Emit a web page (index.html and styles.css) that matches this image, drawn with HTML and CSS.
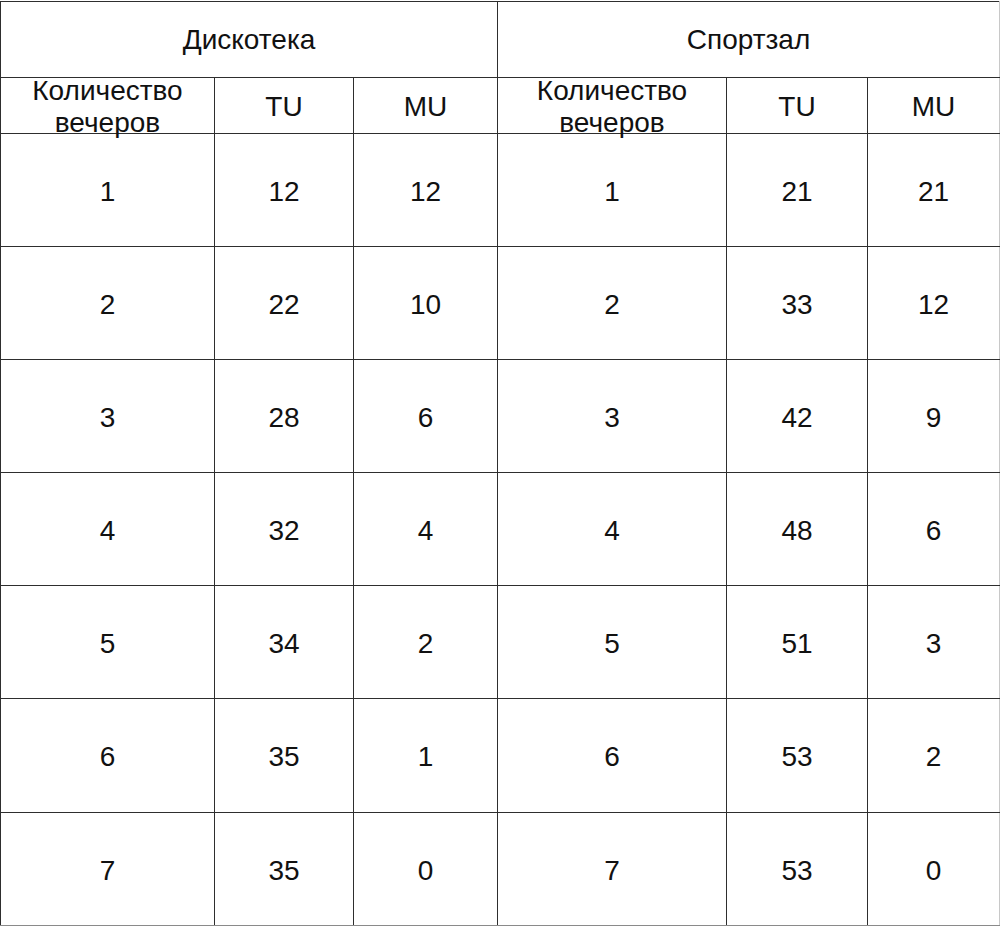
FILE: index.html
```html
<!DOCTYPE html>
<html lang="ru">
<head>
<meta charset="utf-8">
<title>Дискотека и Спортзал</title>
<link rel="stylesheet" href="styles.css">
</head>
<body>
<div class="page">
<table class="grid">
  <colgroup>
    <col class="c1"><col class="c2"><col class="c3"><col class="c4"><col class="c5"><col class="c6">
  </colgroup>
  <thead>
    <tr class="r-title">
      <th colspan="3">Дискотека</th>
      <th colspan="3">Спортзал</th>
    </tr>
    <tr class="r-head">
      <th><div class="fit">Количество вечеров</div></th>
      <th><div class="fit">TU</div></th>
      <th><div class="fit">MU</div></th>
      <th><div class="fit">Количество вечеров</div></th>
      <th><div class="fit">TU</div></th>
      <th><div class="fit">MU</div></th>
    </tr>
  </thead>
  <tbody>
    <tr class="r-data"><td>1</td><td>12</td><td>12</td><td>1</td><td>21</td><td>21</td></tr>
    <tr class="r-data"><td>2</td><td>22</td><td>10</td><td>2</td><td>33</td><td>12</td></tr>
    <tr class="r-data"><td>3</td><td>28</td><td>6</td><td>3</td><td>42</td><td>9</td></tr>
    <tr class="r-data"><td>4</td><td>32</td><td>4</td><td>4</td><td>48</td><td>6</td></tr>
    <tr class="r-data"><td>5</td><td>34</td><td>2</td><td>5</td><td>51</td><td>3</td></tr>
    <tr class="r-data r-tall"><td>6</td><td>35</td><td>1</td><td>6</td><td>53</td><td>2</td></tr>
    <tr class="r-data"><td>7</td><td>35</td><td>0</td><td>7</td><td>53</td><td>0</td></tr>
  </tbody>
</table>
</div>
</body>
</html>
```

FILE: styles.css
```css
html, body {
  margin: 0;
  padding: 0;
  background: #ffffff;
}

.page {
  padding-top: 1px;
  width: 1000px;
}

.grid {
  width: 1000px;
  table-layout: fixed;
  border-collapse: collapse;
  font-family: "Liberation Sans", Arial, sans-serif;
  font-size: 28px;
  color: #111111;
}

.c1 { width: 214px; }
.c2 { width: 139px; }
.c3 { width: 144px; }
.c4 { width: 229px; }
.c5 { width: 141px; }
.c6 { width: 132px; }

.grid th,
.grid td {
  border: 1px solid #2e2e2e;
  padding: 0;
  text-align: center;
  vertical-align: middle;
  font-weight: normal;
  overflow: visible;
}

.grid tr > :last-child {
  border-right-color: #c8c8c8;
}

.grid tbody tr:last-child > * {
  border-bottom-color: #8a8a8a;
}

.r-title { height: 76px; }
.r-head { height: 56px; }
.r-data { height: 113px; }
.r-tall { height: 114px; }

.fit {
  height: 55px;
  display: flex;
  align-items: center;
  justify-content: center;
  line-height: 32px;
  text-align: center;
  padding-top: 2px;
  box-sizing: border-box;
}

.r-data td {
  padding-top: 3px;
}
```
